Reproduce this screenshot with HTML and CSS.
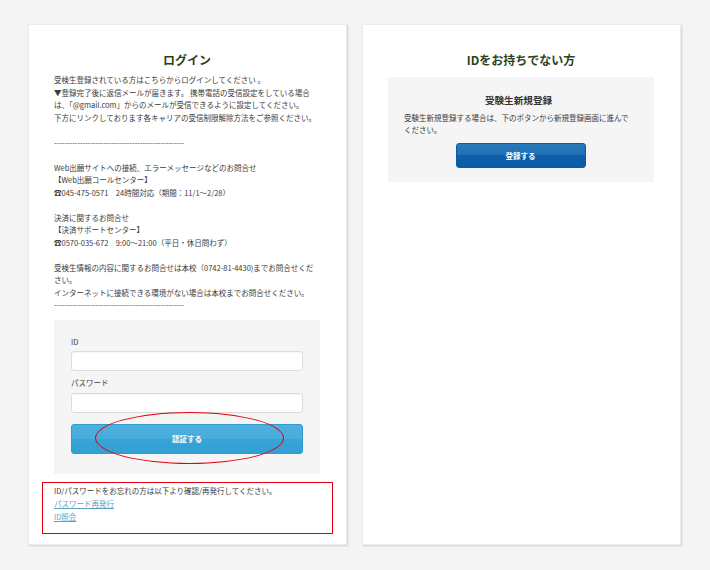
FILE: index.html
```html
<!DOCTYPE html>
<html lang="ja">

<head>
  <meta charset="UTF-8">
  <meta name="viewport" content="width=device-width, initial-scale=1.0">
  <title>ログイン</title>
  <link rel="stylesheet" href="styles.css">
</head>

<body>
  <div class="page">
    <div class="card">
      <h2 class="card-title">ログイン</h2>
      <div class="notice">
        受検生登録されている方はこちらからログインしてください 。<br>
        ▼登録完了後に返信メールが届きます。 携帯電話の受信設定をしている場合は、「@gmail.com」からのメールが受信できるように設定してください。<br>
        下方にリンクしております各キャリアの受信制限解除方法をご参照ください。<br>
        <br>
        --------------------------------------------------<br>
        <br>
        Web出願サイトへの接続、エラーメッセージなどのお問合せ<br>
        【Web出願コールセンター】<br>
        ☎045-475-0571　24時間対応（期間：11/1～2/28）<br>
        <br>
        決済に関するお問合せ<br>
        【決済サポートセンター】<br>
        ☎0570-035-672　9:00～21:00（平日・休日問わず）<br>
        <br>
        受検生情報の内容に関するお問合せは本校（0742-81-4430)までお問合せください。<br>
        インターネットに接続できる環境がない場合は本校までお問合せください。<br>
        --------------------------------------------------
      </div>

      <div class="login-box">
        <label class="field-label" for="login-id">ID</label>
        <input class="field-input" id="login-id" type="text">
        <label class="field-label field-label-second" for="login-pass">パスワード</label>
        <input class="field-input" id="login-pass" type="password">
        <div class="login-action">
          <button class="login-button">認証する</button>
          <div class="mark-ellipse"></div>
        </div>
      </div>

      <div class="forgot">
        <div class="forgot-text">ID/パスワードをお忘れの方は以下より確認/再発行してください。</div>
        <a class="forgot-link" href="#">パスワード再発行</a>
        <a class="forgot-link" href="#">ID照会</a>
        <div class="mark-box"></div>
      </div>
    </div>

    <div class="card">
      <h2 class="card-title">IDをお持ちでない方</h2>
      <div class="register-box">
        <div class="register-title">受験生新規登録</div>
        <div class="register-text">受験生新規登録する場合は、下のボタンから新規登録画面に進んでください。</div>
        <button class="register-button">登録する</button>
      </div>
    </div>
  </div>
</body>

</html>
```

FILE: styles.css
```css
body {
  background-color: #f4f4f4;
  font-family: "Noto Sans CJK JP", "Noto Sans", sans-serif;
  color: #3a3a3a;
  margin: 0;
  padding: 0;
}

.page {
  display: flex;
  gap: 15px;
  padding: 24px 28px;
}

.card {
  width: 319px;
  height: 521px;
  box-sizing: border-box;
  padding: 27px 26px 0 25px;
  background-color: #fff;
  border: 1px solid #ececec;
  box-shadow: 1px 1px 2px rgba(0, 0, 0, 0.15);
}

.card-title {
  font-size: 12px;
  line-height: 18px;
  font-weight: bold;
  color: #2c4418;
  text-align: center;
  margin: -1px 0 5px;
}

.notice {
  font-size: 7.5px;
  line-height: 12.5px;
}

.login-box {
  margin-top: 8px;
  padding: 16px 17px 20px;
  background-color: #f5f5f5;
}

.field-label {
  display: block;
  font-size: 7.5px;
  line-height: 12px;
  margin-bottom: 3px;
}

.field-label-second {
  margin-top: 6px;
  margin-bottom: 4px;
}

.field-input {
  display: block;
  width: 100%;
  height: 20px;
  box-sizing: border-box;
  border: 1px solid #dcdcdc;
  border-radius: 3px;
  background-color: #fff;
  box-shadow: inset 0 1px 1px rgba(0, 0, 0, 0.04);
}

.login-action {
  position: relative;
  margin-top: 11px;
}

.login-button {
  display: block;
  width: 100%;
  height: 30px;
  border: 1px solid #2f9bd0;
  border-radius: 3px;
  background: linear-gradient(#4eb0de 0%, #48acdb 50%, #38a4d7 50%, #32a0d4 100%);
  color: #fff;
  font-family: inherit;
  font-size: 7.5px;
  font-weight: bold;
}

.mark-ellipse {
  position: absolute;
  left: 24px;
  top: -12px;
  width: 189px;
  height: 52px;
  box-sizing: border-box;
  border: 1px solid #e4000f;
  border-radius: 50%;
}

.forgot {
  position: relative;
  margin-top: 10px;
  font-size: 7.5px;
  line-height: 13px;
}

.forgot-link {
  display: block;
  width: max-content;
  color: #5b9fc3;
}

.mark-box {
  position: absolute;
  left: -12px;
  top: -2px;
  right: -13px;
  height: 50px;
  border: 1.5px solid #e4000f;
}

.register-box {
  margin-top: 8px;
  padding: 16px 21px 14px 16px;
  background-color: #f5f5f5;
  text-align: center;
}

.register-title {
  font-size: 9.6px;
  line-height: 14px;
  font-weight: bold;
  color: #333;
  margin-bottom: 5px;
}

.register-text {
  font-size: 7.5px;
  line-height: 12px;
  text-align: left;
}

.register-button {
  display: block;
  width: 130px;
  height: 25px;
  margin: 7px auto 0;
  position: relative;
  left: 2px;
  border: 1px solid #0b5ba0;
  border-radius: 3px;
  background: linear-gradient(#2a79b9 0%, #2071b3 50%, #0c60a9 50%, #0a5ca5 100%);
  color: #fff;
  font-family: inherit;
  font-size: 7.5px;
  font-weight: bold;
}
```
